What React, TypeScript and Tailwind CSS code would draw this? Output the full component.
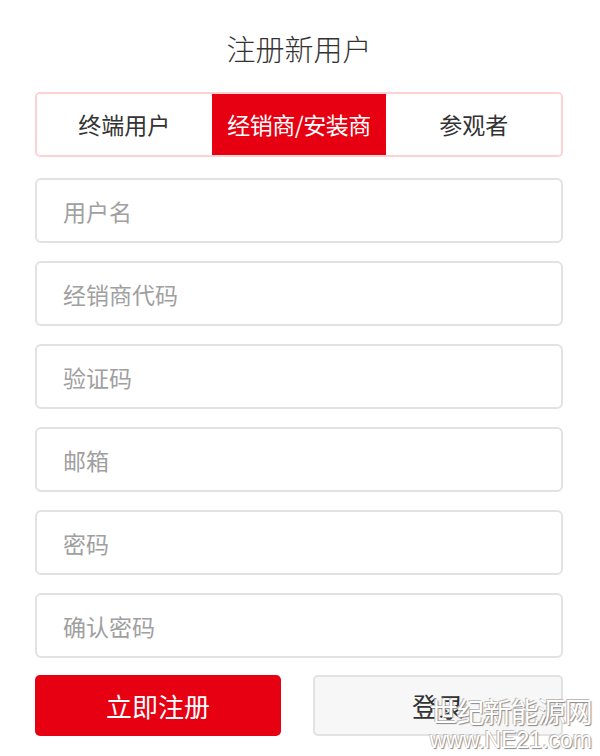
import React, { useState } from "react";

const font = { fontFamily: '"Noto Sans CJK SC", "Noto Sans", sans-serif' };

const tabs = ["终端用户", "经销商/安装商", "参观者"];
const fields = ["用户名", "经销商代码", "验证码", "邮箱", "密码", "确认密码"];

export default function App() {
  const [active, setActive] = useState(1);

  return (
    <div className="relative w-[600px] h-[756px] bg-white overflow-hidden" style={font}>
      <div className="flex flex-col pl-[35px] pr-[37px] pt-[28px]">
        <h2 className="text-center text-[29px] leading-[40px] text-[#333] font-light">注册新用户</h2>

        <div className="mt-[24px] flex h-[65px] border-2 border-[#ffd2d2] rounded-[5px] overflow-hidden">
          {tabs.map((t, i) => (
            <button
              key={t}
              onClick={() => setActive(i)}
              className={
                i === active
                  ? "flex-1 flex items-center justify-center bg-[#e60012] text-white text-[23px] tracking-[-0.5px]"
                  : "flex-1 flex items-center justify-center bg-white text-[#333] text-[23px]"
              }
            >
              {t}
            </button>
          ))}
        </div>

        <div className="mt-[21px] flex flex-col gap-[18px]">
          {fields.map((f) => (
            <input
              key={f}
              placeholder={f}
              type={f.includes("密码") ? "password" : "text"}
              className="h-[65px] w-full border-2 border-[#e2e2e2] rounded-[6px] px-[26px] text-[23px] text-[#333] placeholder:text-[#a0a0a0] outline-none"
            />
          ))}
        </div>

        <div className="mt-[17px] flex gap-[32px]">
          <button className="flex-1 h-[61px] rounded-[5px] bg-[#e60012] text-white text-[26px]">
            立即注册
          </button>
          <button className="flex-1 h-[61px] rounded-[5px] bg-[#f7f7f7] border-2 border-[#e2e2e2] text-[#333] text-[26px]">
            登录
          </button>
        </div>
      </div>

      {/* watermark */}
      <div className="absolute right-[8px] bottom-[4px] flex flex-col items-center text-white pointer-events-none [text-shadow:1px_1px_1px_#888,-1px_-1px_0_#bbb]">
        <span className="text-[28px] leading-[34px] tracking-[-1px]">世纪新能源网</span>
        <span className="text-[23px] leading-[24px]" style={{ fontFamily: '"Liberation Sans", sans-serif' }}>
          www.NE21.com
        </span>
      </div>
    </div>
  );
}
